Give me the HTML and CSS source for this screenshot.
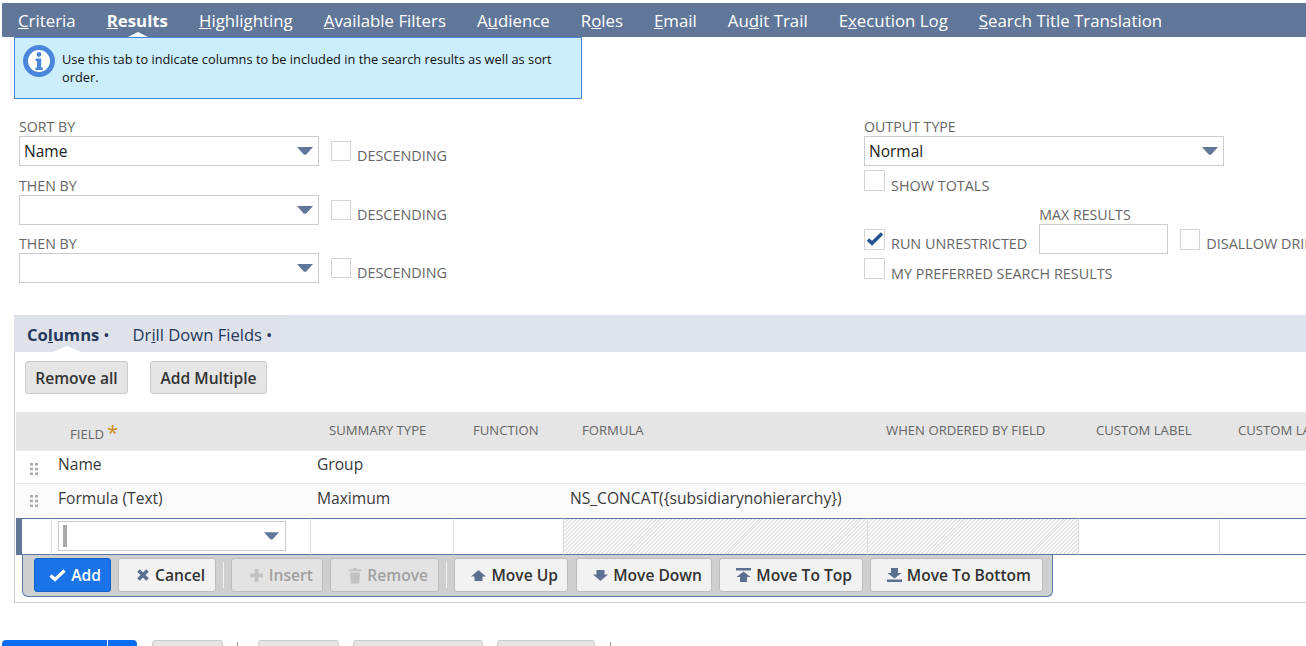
FILE: index.html
```html
<!DOCTYPE html>
<html lang="en">
<head>
<meta charset="utf-8">
<title>Saved Search Results</title>
<link rel="stylesheet" href="styles.css">
</head>
<body>
<div class="page">
  <nav class="tabs">
    <a class="tab"><u>C</u>riteria</a>
    <a class="tab tab-active"><u>R</u>esults</a>
    <a class="tab"><u>H</u>ighlighting</a>
    <a class="tab"><u>A</u>vailable Filters</a>
    <a class="tab">A<u>u</u>dience</a>
    <a class="tab">R<u>o</u>les</a>
    <a class="tab"><u>E</u>mail</a>
    <a class="tab">Au<u>d</u>it Trail</a>
    <a class="tab">E<u>x</u>ecution Log</a>
    <a class="tab"><u>S</u>earch Title Translation</a>
  </nav>

  <div class="notice">
    <svg class="notice-icon" viewBox="0 0 32 32" width="32" height="32">
      <circle cx="16" cy="16" r="13.5" fill="#fff" stroke="#4a86dc" stroke-width="5"/>
      <circle cx="16" cy="9.5" r="2.4" fill="#4a86dc"/>
      <path d="M12.6 13.4h5.6v9h1.6v2.6h-7.4v-2.6h1.6v-6.4h-1.4z" fill="#4a86dc"/>
    </svg>
    <p class="notice-text">Use this tab to indicate columns to be included in the search results as well as sort order.</p>
  </div>

  <section class="form">
    <div class="sort-col">
      <div class="sort-field">
        <div class="label">SORT BY</div>
        <div class="control-row">
          <div class="select select-sort">Name<svg class="arrow" viewBox="0 0 16 8" width="16" height="8"><path d="M0 0h16l-6.5 7.2q-1.5 1.2-3 0z"/></svg></div>
          <span class="check"></span><span class="check-label">DESCENDING</span>
        </div>
      </div>
      <div class="sort-field">
        <div class="label">THEN BY</div>
        <div class="control-row">
          <div class="select select-sort"><svg class="arrow" viewBox="0 0 16 8" width="16" height="8"><path d="M0 0h16l-6.5 7.2q-1.5 1.2-3 0z"/></svg></div>
          <span class="check"></span><span class="check-label">DESCENDING</span>
        </div>
      </div>
      <div class="sort-field">
        <div class="label">THEN BY</div>
        <div class="control-row">
          <div class="select select-sort"><svg class="arrow" viewBox="0 0 16 8" width="16" height="8"><path d="M0 0h16l-6.5 7.2q-1.5 1.2-3 0z"/></svg></div>
          <span class="check"></span><span class="check-label">DESCENDING</span>
        </div>
      </div>
    </div>
    <div class="output-col">
      <div class="label">OUTPUT TYPE</div>
      <div class="select select-output">Normal<svg class="arrow" viewBox="0 0 16 8" width="16" height="8"><path d="M0 0h16l-6.5 7.2q-1.5 1.2-3 0z"/></svg></div>
      <div class="opt-row">
        <span class="check check-lg"></span><span class="check-label">SHOW TOTALS</span>
      </div>
      <div class="max-row">
        <span class="check check-lg check-on">
          <svg viewBox="0 0 19 19" width="19" height="19"><path d="M3 9.500l4 3.800L17 3.500" fill="none" stroke="#24518f" stroke-width="3.400"/></svg>
        </span>
        <span class="check-label">RUN UNRESTRICTED</span>
        <div class="max-field">
          <div class="label">MAX RESULTS</div>
          <div class="text-input"></div>
        </div>
        <span class="check check-lg check-disallow"></span>
        <span class="check-label">DISALLOW DRILL DOWN</span>
      </div>
      <div class="opt-row">
        <span class="check check-lg"></span><span class="check-label">MY PREFERRED SEARCH RESULTS</span>
      </div>
    </div>
  </section>

  <div class="subtabs">
    <div class="subtab-group">
      <a class="subtab subtab-active">Co<u>l</u>umns<span class="dot">•</span></a>
      <a class="subtab">Dr<u>i</u>ll Down Fields<span class="dot">•</span></a>
    </div>
  </div>

  <section class="panel">
    <div class="panel-actions">
      <button class="btn-plain btn-remove-all">Remove all</button>
      <button class="btn-plain btn-add-multiple">Add Multiple</button>
    </div>

    <div class="table-wrap">
      <table class="grid">
        <colgroup>
          <col class="c-drag"><col class="c-field"><col class="c-summary"><col class="c-function">
          <col class="c-formula"><col class="c-when"><col class="c-label"><col class="c-label2">
        </colgroup>
        <thead>
          <tr>
            <th></th>
            <th class="th-field">FIELD<span class="req">*</span></th>
            <th>SUMMARY TYPE</th>
            <th class="th-wide">FUNCTION</th>
            <th>FORMULA</th>
            <th>WHEN ORDERED BY FIELD</th>
            <th class="th-tight">CUSTOM LABEL</th>
            <th>CUSTOM LABEL TRANSLATION</th>
          </tr>
        </thead>
        <tbody>
          <tr class="row">
            <td class="drag"><svg viewBox="0 0 8 12" width="8" height="12"><path d="M0 0h3v2.400H0zM5 0h3v2.400H5zM0 4.800h3v2.400H0zM5 4.800h3v2.400H5zM0 9.600h3V12H0zM5 9.600h3V12H5z"/></svg></td>
            <td>Name</td><td>Group</td><td></td><td></td><td></td><td></td><td></td>
          </tr>
          <tr class="row row-alt">
            <td class="drag"><svg viewBox="0 0 8 12" width="8" height="12"><path d="M0 0h3v2.400H0zM5 0h3v2.400H5zM0 4.800h3v2.400H0zM5 4.800h3v2.400H5zM0 9.600h3V12H0zM5 9.600h3V12H5z"/></svg></td>
            <td>Formula (Text)</td><td>Maximum</td><td></td><td class="nowrap" colspan="2">NS_CONCAT({subsidiarynohierarchy})</td><td></td><td></td>
          </tr>
          <tr class="row-edit">
            <td class="edit-first"></td>
            <td class="edit-field">
              <div class="select select-edit"><span class="caret"></span><svg class="arrow" viewBox="0 0 16 8" width="15" height="8"><path d="M0 0h16l-6.500 7.200q-1.500 1.200-3 0z"/></svg></div>
            </td>
            <td></td><td></td><td class="hatch"></td><td class="hatch"></td><td></td><td></td>
          </tr>
        </tbody>
      </table>
    </div>

    <div class="toolbar">
      <button class="tbtn tbtn-add"><svg viewBox="0 0 17 14" width="17" height="14"><path d="M1.500 7.500l4.500 4L15.500 2.500" fill="none" stroke="#fff" stroke-width="3.200"/></svg>Add</button>
      <button class="tbtn tbtn-cancel"><svg viewBox="0 0 14 14" width="14" height="14"><path d="M2.500 2.500l9 9M11.500 2.500l-9 9" fill="none" stroke="#5b6f8f" stroke-width="3.600"/></svg>Cancel</button>
      <span class="tsep"></span>
      <button class="tbtn tbtn-off tbtn-insert"><svg viewBox="0 0 15 15" width="15" height="15"><path d="M7.500 1v13M1 7.500h13" fill="none" stroke="#c2c2c2" stroke-width="3.600"/></svg>Insert</button>
      <button class="tbtn tbtn-off tbtn-remove"><svg viewBox="0 0 14 17" width="14" height="17"><path d="M0.500 2.500h13v1.800h-13zM5 1h4v1.500H5zM2 5.400h10l-0.800 11H2.800z" fill="#c2c2c2"/></svg>Remove</button>
      <span class="tsep"></span>
      <button class="tbtn tbtn-up"><svg viewBox="0 0 15 11" width="15" height="11"><path d="M7 .4q.5-.4 1 0L15 6.500H11.500V11h-8V6.500H0z" fill="#5b6f8f"/></svg>Move Up</button>
      <button class="tbtn tbtn-down"><svg viewBox="0 0 15 11" width="15" height="11"><path d="M3.500 0h8v4.500H15L8 10.600q-.5.400-1 0L0 4.500H3.500z" fill="#5b6f8f"/></svg>Move Down</button>
      <button class="tbtn tbtn-top"><svg viewBox="0 0 15 14" width="15" height="14"><path d="M0 0h15v2.500H0zM7.500 3.500L14.500 9H11v5H4V9H.5z" fill="#5b6f8f"/></svg>Move To Top</button>
      <button class="tbtn tbtn-bottom"><svg viewBox="0 0 15 14" width="15" height="14"><path d="M4 0h7v5h3.500L7.500 10.500.5 5H4zM0 11.500h15V14H0z" fill="#5b6f8f"/></svg>Move To Bottom</button>
    </div>
  </section>

  <footer class="footer">
    <div class="fbtn-primary"><span class="fbtn-main"></span><span class="fbtn-split"></span></div>
    <span class="fbtn fbtn-a"></span>
    <span class="fsep fsep-a"></span>
    <span class="fbtn fbtn-b"></span>
    <span class="fbtn fbtn-c"></span>
    <span class="fbtn fbtn-d"></span>
    <span class="fsep fsep-b"></span>
  </footer>
</div>
</body>
</html>
```
FILE: styles.css
```css
* { box-sizing: border-box; }
html, body { margin: 0; padding: 0; background: #fff; }
body { font-family: "Open Sans", "Liberation Sans", sans-serif; color: #333; }
.page { width: 1306px; height: 646px; overflow: hidden; }
button { font-family: inherit; padding: 0; margin: 0; cursor: default; }

/* top tabs */
.tabs { display: flex; gap: 31px; height: 34px; margin: 3px 0 0 2px; padding-left: 16px; background: #607799; color: #fff; font-size: 16.830px; white-space: nowrap; }
.tab { position: relative; line-height: 36px; height: 34px; }
.tab-active { font-weight: 700; }
.tab-active::after { content: ""; position: absolute; left: 21px; bottom: 0; width: 0; height: 0; border-left: 10px solid transparent; border-right: 10px solid transparent; border-bottom: 5px solid #fff; }

/* info notice */
.notice { display: flex; width: 568px; height: 62px; margin-left: 14px; padding: 7px 20px 0 8px; gap: 7px; background: #cceefc; border: 1px solid #4a86dc; }
.notice-icon { flex: none; }
.notice-text { margin: 5px 0 0; font-size: 12.800px; line-height: 18px; color: #111; }

/* form */
.form { display: flex; padding: 21px 0 20px 19px; }
.sort-col { width: 845px; flex: none; display: grid; grid-template-rows: 59px 58px 58px; }
.output-col { flex: none; width: 442px; }
.label { height: 16px; font-size: 14.200px; line-height: 13px; color: #666; white-space: nowrap; }
.control-row { display: flex; align-items: flex-start; }
.select { position: relative; display: flex; align-items: center; height: 30px; padding-left: 4px; background: #fff; border: 1px solid #ccc; font-size: 15.500px; color: #222; }
.select-sort { width: 300px; }
.select-output { width: 360px; }
.select .arrow { position: absolute; right: 5px; top: 10px; fill: #607799; }
.check { flex: none; display: block; width: 20px; height: 20px; margin: 5px 0 0 12px; background: #fff; border: 1px solid #d4d4d4; }
.check-label { margin: 12px 0 0 6px; font-size: 14.400px; line-height: 16px; color: #666; white-space: nowrap; }
.check-lg { width: 21px; height: 21px; margin: 0; }
.opt-row { display: flex; margin-top: 4px; }
.opt-row .check-label { margin-top: 8px; }
.max-row { display: flex; align-items: flex-start; height: 46px; margin-top: 14px; white-space: nowrap; }
.max-row .check-lg { margin-top: 21px; }
.max-row .check-label { margin-top: 28px; }
.check-on { display: flex; align-items: center; justify-content: center; }
.max-field { flex: none; margin-left: 12px; }
.text-input { width: 129px; height: 30px; border: 1px solid #ccc; background: #fff; }
.max-row .check-disallow { width: 20px; margin-left: 12px; }

/* sub tabs */
.subtabs { height: 37px; margin-left: 14px; background: #dfe5ef; }
.subtab-group { display: flex; width: 273px; height: 37px; padding-left: 13px; gap: 23px; background: #dfe2ea; color: #24385b; font-size: 16.600px; line-height: 39px; white-space: nowrap; }
.subtab { position: relative; }
.subtab-active { font-weight: 700; }
.subtab-active::after { content: ""; position: absolute; left: 26px; bottom: 0; width: 0; height: 0; border-left: 14px solid transparent; border-right: 14px solid transparent; border-bottom: 6px solid #fff; }
.dot { margin-left: 4px; font-weight: 400; }

/* panel */
.panel { height: 251px; margin-left: 14px; border-left: 1px solid #ccc; border-bottom: 1px solid #ccc; }
.panel-actions { display: flex; gap: 22px; padding: 9px 0 0 10px; }
.btn-plain { height: 33px; background: #e5e5e5; border: 1px solid #ccc; border-radius: 3px; font-size: 15.600px; font-weight: 600; color: #333; }
.btn-remove-all { width: 103px; }
.btn-add-multiple { width: 117px; }

/* table */
.table-wrap { margin: 18px 0 0 1px; overflow: hidden; }
.grid { width: 1290px; table-layout: fixed; border-collapse: separate; border-spacing: 0; font-size: 15.600px; }
.c-drag { width: 35px; } .c-field { width: 259px; } .c-summary { width: 143px; } .c-function { width: 110px; }
.c-formula { width: 304px; } .c-when { width: 211px; } .c-label { width: 141px; } .c-label2 { width: 87px; }
.grid th { height: 39px; padding: 0 0 5px 19px; background: #e5e5e5; font-size: 13.150px; font-weight: 400; color: #666; text-align: left; white-space: nowrap; overflow: hidden; border-top: 1px solid #e9e9e9; }
.grid .th-field { padding: 4px 0 0 19px; }
.grid .th-wide { padding-left: 20px; }
.grid .th-tight { padding-left: 18px; }
.req { margin-left: 3px; font-size: 20px; line-height: 12px; color: #d08a10; vertical-align: -1px; }
.grid td { padding: 0 0 0 7px; }
.row td { height: 33px; border-bottom: 1px solid #e6e6e6; vertical-align: middle; padding-bottom: 6px; color: #3a3a3a; }
.row-alt td { height: 34px; background: #fafafa; border-bottom: 0; }
.grid .drag { padding: 3px 0 0 14px; fill: #aaa; }
.grid .row-alt .drag { padding: 0 0 0 14px; }
.drag svg { display: block; }
.nowrap { white-space: nowrap; }
.row-edit td { height: 37px; border-top: 1px solid #5b77a5; border-bottom: 1px solid #5b77a5; border-left: 1px solid #dcdcdc; background: #fff; vertical-align: top; }
.grid .edit-first { border-left: 6px solid #607799; padding: 0; }
.grid .edit-field { padding: 2px 0 0 6px; }
.select-edit { width: 228px; height: 30px; padding-left: 4px; }
.caret { width: 4px; height: 22px; background: #aaa; }
.select-edit .arrow { right: 6px; top: 10px; }
.grid .row-edit .hatch { background: repeating-linear-gradient(135deg, #e6e6e6 0 1.400px, #fafafa 1.400px 2.800px); }

/* inline edit toolbar */
.toolbar { display: flex; align-items: flex-start; width: 1031px; height: 42px; margin-left: 7px; padding: 3px 0 0 11px; background: #cfcfcf; border: 1px solid #5b77a5; border-top: 0; border-radius: 0 0 6px 6px; }
.tbtn { display: flex; align-items: center; justify-content: flex-end; gap: 5px; height: 34px; margin-right: 7px; padding-right: 9px; background: #f2f2f2; border: 1px solid #bdbdbd; border-radius: 3px; font-size: 15.600px; font-weight: 600; color: #333; white-space: nowrap; }
.tbtn-add { width: 77px; background: #1a73e8; border-color: #1560c4; color: #fff; }
.tbtn-cancel { width: 98px; padding-right: 10px; }
.tbtn-off { background: #e3e3e3; color: #a0a0a0; }
.tbtn-insert { width: 92px; }
.tbtn-remove { width: 109px; padding-right: 10px; }
.tbtn-up { width: 114px; margin-right: 8px; }
.tbtn-down { width: 136px; }
.tbtn-top { width: 144px; padding-right: 10px; }
.tbtn-bottom { width: 173px; margin-right: 0; padding-right: 11px; }
.tsep { width: 1px; height: 26px; margin: 4px 7px 0 0; background: #f4f4f4; }

/* footer buttons */
.footer { display: flex; align-items: flex-start; height: 20px; margin-top: 37px; padding-left: 2px; }
.fbtn-primary { display: flex; width: 135px; height: 20px; border-radius: 4px; overflow: hidden; background: #0a6cf0; }
.fbtn-main { width: 106px; border-right: 1px solid #fff; }
.fbtn { height: 20px; background: #e5e5e5; border: 1px solid #ccc; border-radius: 3px; }
.fbtn-a { width: 71px; margin-left: 15px; }
.fsep { width: 1px; height: 8px; margin-top: 2px; background: #999; }
.fsep-a { margin-left: 14px; }
.fbtn-b { width: 81px; margin-left: 20px; }
.fbtn-c { width: 130px; margin-left: 14px; }
.fbtn-d { width: 98px; margin-left: 14px; }
.fsep-b { margin-left: 15px; }
```
